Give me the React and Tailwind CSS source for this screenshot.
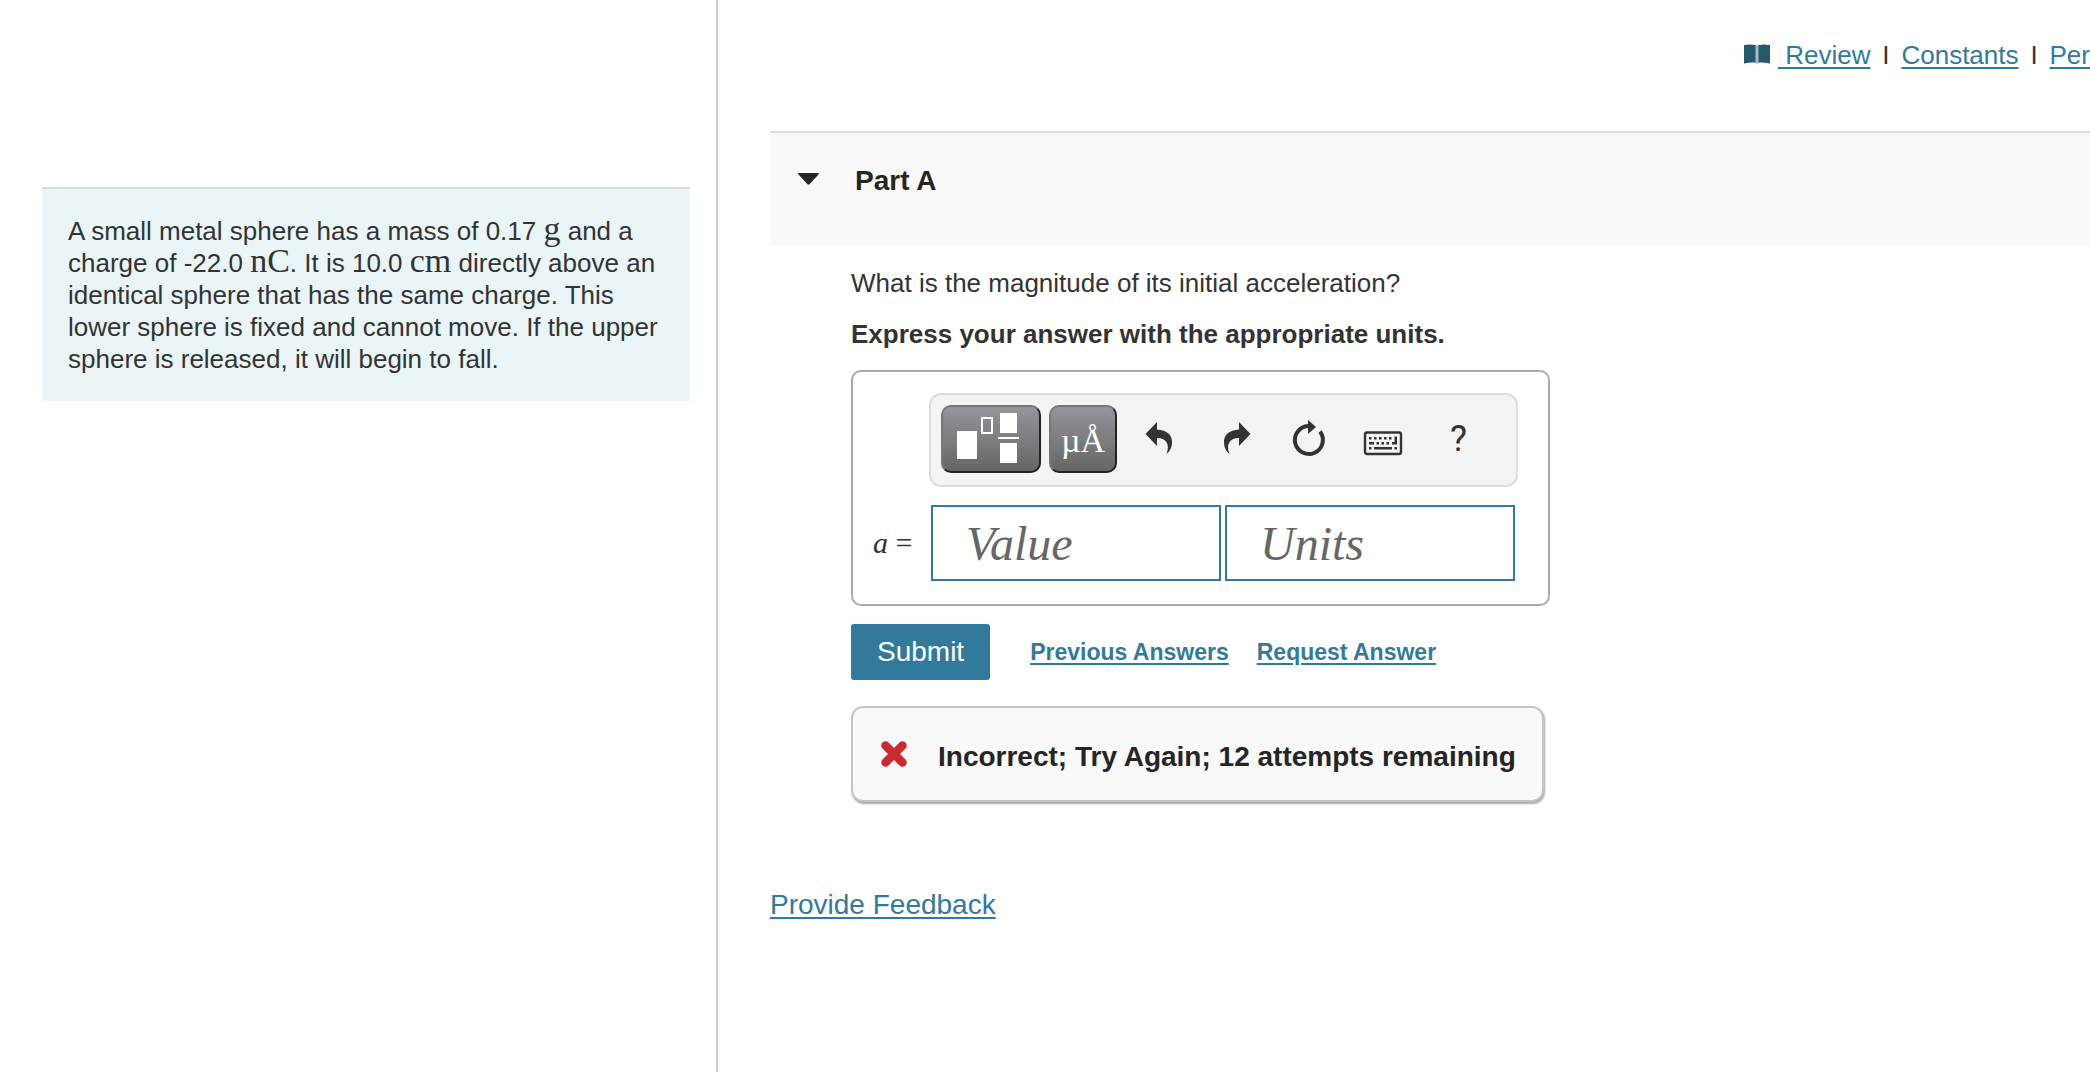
const linkClass = "text-[#327a9b] underline decoration-2 underline-offset-3";

function MathUnit({ children }) {
  return (
    <span className="font-['Liberation_Serif',serif] text-[34px] leading-[0]">{children}</span>
  );
}

function IconButton({ label, children }) {
  return (
    <button type="button" aria-label={label} className="flex h-16 w-[75px] items-center justify-center text-[#333]">
      {children}
    </button>
  );
}

function ToolIcon({ children }) {
  return (
    <svg viewBox="0 0 40 40" className="h-10 w-10 overflow-visible" fill="currentColor" aria-hidden="true">
      {children}
    </svg>
  );
}

const paletteButton =
  "flex h-[68px] items-center justify-center rounded-[10px] border-2 border-t-[#777] border-l-[#777] border-r-[#222] border-b-[#222] bg-linear-to-b from-[#96949c] to-[#666] text-white";

function Toolbar() {
  return (
    <div className="flex items-center rounded-xl border-2 border-[#ddd] bg-[#f4f4f4] pt-2.5 pr-5 pb-3 pl-2.5">
      <button type="button" aria-label="Templates" className={`${paletteButton} mr-2 w-[100px]`}>
        <svg viewBox="2 2 96 64" className="h-16 w-24" fill="white" aria-hidden="true">
          <rect x="16" y="26" width="20" height="28" />
          <rect x="41" y="13" width="10" height="15" fill="none" stroke="white" strokeWidth="2" />
          <rect x="59" y="8" width="17" height="20" />
          <rect x="57" y="32" width="21" height="2" />
          <rect x="59" y="38" width="17" height="20" />
        </svg>
      </button>
      <button
        type="button"
        aria-label="Symbols"
        className={`${paletteButton} mr-1 w-[68px] pt-1 font-['Liberation_Serif',serif] text-[34px] leading-10`}
      >
        µÅ
      </button>
      <IconButton label="Undo">
        <ToolIcon>
          <path d="M6.500 15 18 3v7.500C28 11 33.500 16 33 24c-.3 5-2 8-5.500 11C31 26 28 19 18 19v8Z" />
        </ToolIcon>
      </IconButton>
      <IconButton label="Redo">
        <ToolIcon>
          <path d="M36.500 15 25 3v7.500C15 11 9.500 16 10 24c.3 5 2 8 5.500 11C12 26 15 19 25 19v8Z" />
        </ToolIcon>
      </IconButton>
      <IconButton label="Reset">
        <ToolIcon>
          <path d="M20 7A14 14 0 1 0 31 12.500" fill="none" stroke="currentColor" strokeWidth="4" />
          <path d="M19 1 27 8 19 15Z" />
        </ToolIcon>
      </IconButton>
      <IconButton label="Keyboard shortcuts">
        <ToolIcon>
          <rect x="1" y="13.500" width="36" height="21.500" rx="2" fill="none" stroke="currentColor" strokeWidth="2.400" />
          <path d="M5 18h2.500v2.500H5zM10 18h2.500v2.500H10zM15 18h2.500v2.500H15zM20 18h2.500v2.500H20zM25 18h2.500v2.500H25zM30.500 17.500H33v8h-5V23h2.500zM5 23h5v2.500H5zM12.500 23H15v2.500h-2.500zM17.500 23H20v2.500h-2.500zM22.500 23H25v2.500h-2.500zM5 28h2.500v2.500H5zM10 28h18v2.500H10zM30.500 28H33v2.500h-2.500z" />
        </ToolIcon>
      </IconButton>
      <IconButton label="Help">
        <span className="font-[Roboto,sans-serif] text-4xl font-normal">?</span>
      </IconButton>
    </div>
  );
}

const fieldClass =
  "h-[76px] w-[290px] border-2 border-[#327a9b] bg-white px-[33px] font-['Liberation_Serif',serif] text-5xl italic text-[#333] placeholder:text-[#666] outline-none";

export default function App() {
  return (
    <div className="flex min-h-screen overflow-hidden bg-white font-['Liberation_Sans',Arial,sans-serif] text-[26px] leading-8 text-[#333]">
      <aside className="w-[718px] shrink-0 border-r-2 border-[#bfcddd] pt-[187px] pr-[26px] pl-[42px]">
        <section className="border-t-2 border-[#ddd] bg-[#e9f5f7] p-[26px]">
          <p>
            A small metal sphere has a mass of 0.17 <MathUnit>g</MathUnit> and a
            <br />
            charge of -22.0 <MathUnit>nC</MathUnit>. It is 10.0 <MathUnit>cm</MathUnit> directly above an
            <br />
            identical sphere that has the same charge. This
            <br />
            lower sphere is fixed and cannot move. If the upper
            <br />
            sphere is released, it will begin to fall.
          </p>
        </section>
      </aside>

      <main className="min-w-0 flex-1 pl-[52px]">
        <nav className="flex h-[131px] items-start justify-end pt-[39px]">
          <svg viewBox="0 0 26 20" className="mt-[5px] mr-2 h-5 w-[26px]" aria-hidden="true">
            <path d="M0 1Q6 0 11 1L13 2 15 1Q20 0 26 1V19.500Q20 18 15 18.500L13 19.500 11 18.500Q6 18 0 19.500Z" fill="#24596e" />
            <path d="M11.500 1.500 13 2.500 14.500 1.500V18.500L13 19.500 11.500 18.500Z" fill="#a5bcc6" />
          </svg>
          <a href="#review" className={`${linkClass} whitespace-pre`}> Review</a>
          <span className="w-[31px] text-center">I</span>
          <a href="#constants" className={linkClass}>Constants</a>
          <span className="w-[31px] text-center">I</span>
          <a href="#periodic" className={linkClass}>Per</a>
        </nav>

        <header className="flex h-[115px] items-start border-t-2 border-[#ddd] bg-[#f9f9f9] pt-8 pl-7 text-[#252525]">
          <button type="button" aria-label="Collapse Part A" className="mt-2 mr-9 h-3 w-[21px]">
            <svg viewBox="0 0 21 12" className="h-3 w-[21px]" fill="#252525" aria-hidden="true">
              <path d="M1 0H20Q21.500 .5 20.500 1.500L11.500 11.200Q10.500 12 9.500 11.200L.5 1.500Q-.5 .5 1 0Z" />
            </svg>
          </button>
          <h2 className="text-[28px] font-bold">Part A</h2>
        </header>

        <div className="flex flex-col items-start pt-[21px] pl-[81px]">
          <p>What is the magnitude of its initial acceleration?</p>
          <p className="mt-[19px] font-bold">Express your answer with the appropriate units.</p>

          <form className="flex flex-col items-start" onSubmit={(e) => e.preventDefault()}>
            <div className="mt-5 rounded-[10px] border-2 border-[#aaa] pt-[21px] pr-[30px] pb-[23px] pl-5">
              <div className="pl-14">
                <Toolbar />
              </div>
              <div className="mt-[18px] flex items-center">
                <label htmlFor="value" className="w-[58px] font-['Liberation_Serif',serif] text-[30px]">
                  <i>a</i> =
                </label>
                <input id="value" aria-label="Value" placeholder="Value" className={`${fieldClass} mr-1`} />
                <input id="units" aria-label="Units" placeholder="Units" className={fieldClass} />
              </div>
            </div>

            <div className="mt-[18px] flex items-center text-[23px] font-bold">
              <button type="submit" className="mr-10 h-14 rounded-[3px] bg-[#327a9b] px-[26px] text-[28px] font-normal text-white">
                Submit
              </button>
              <a href="#previous" className={`${linkClass} mr-7`}>Previous Answers</a>
              <a href="#request" className={linkClass}>Request Answer</a>
            </div>
          </form>

          <div
            role="status"
            className="mt-[26px] flex h-24 items-center rounded-xl border-2 border-[#c4c4c4] bg-[#f9f9f9] pr-[26px] pl-7 text-[28px] font-bold text-[#252525] shadow-[1px_2px_2px_#aaa]"
          >
            <svg viewBox="0 0 26 26" className="mr-[31px] h-[26px] w-[26px]" aria-hidden="true">
              <path d="M4.500 4.500 21.500 21.500M21.500 4.500 4.500 21.500" stroke="#cc2a2e" strokeWidth="8.500" strokeLinecap="round" />
            </svg>
            <p className="pt-1.5">Incorrect; Try Again; 12 attempts remaining</p>
          </div>
        </div>

        <a href="#feedback" className={`${linkClass} mt-[87px] inline-block text-[28px]`}>Provide Feedback</a>
      </main>
    </div>
  );
}
